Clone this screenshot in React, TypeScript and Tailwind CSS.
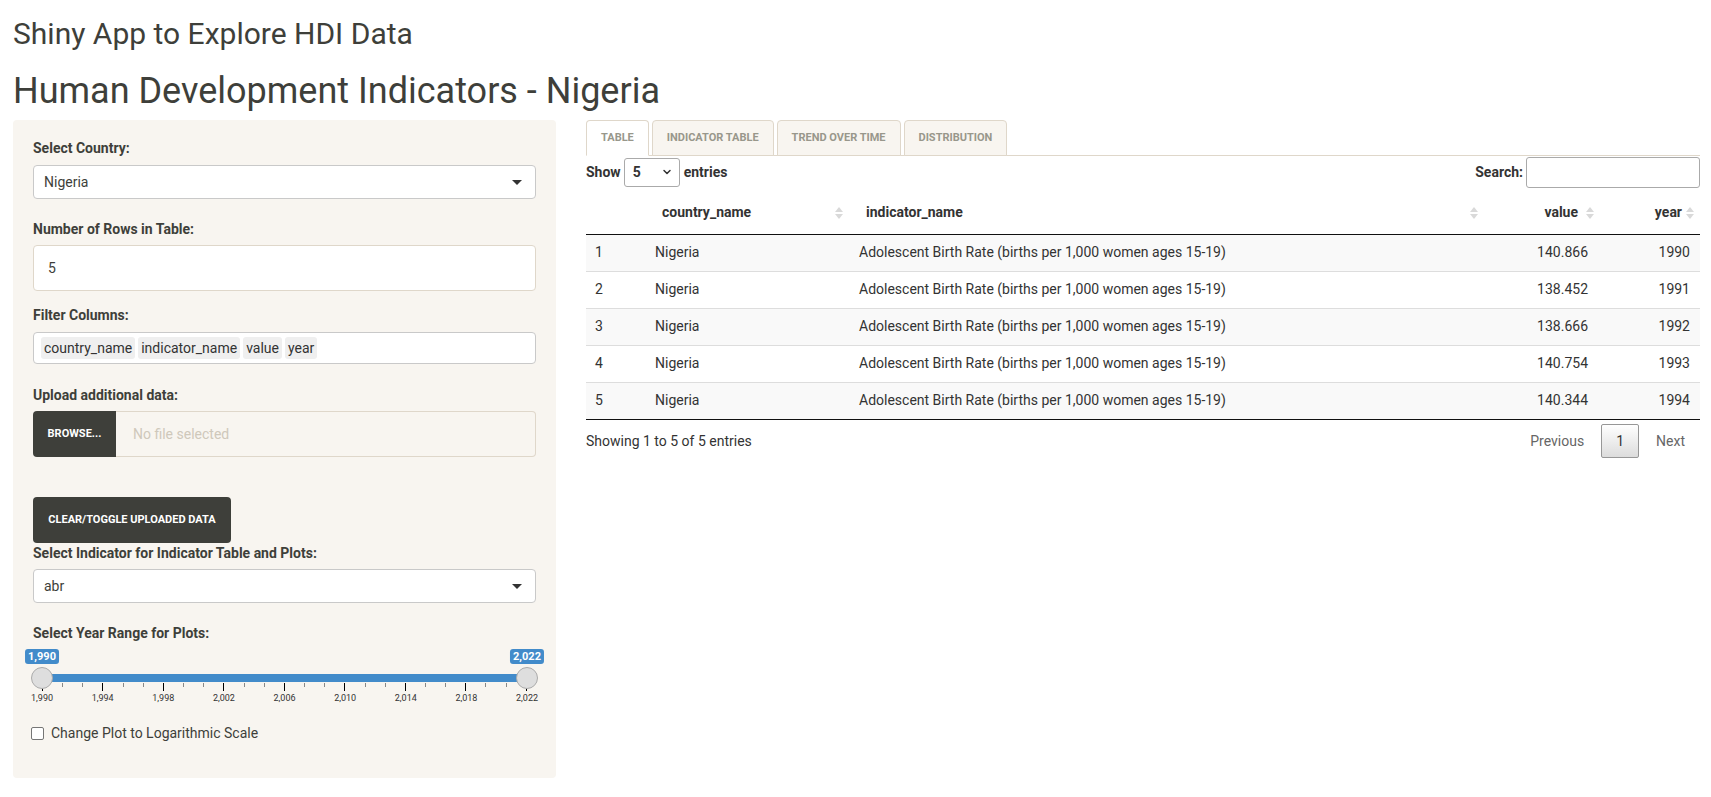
import { ChevronDown } from "lucide-react";

const rows = [
  { id: 1, value: "140.866", year: "1990" },
  { id: 2, value: "138.452", year: "1991" },
  { id: 3, value: "138.666", year: "1992" },
  { id: 4, value: "140.754", year: "1993" },
  { id: 5, value: "140.344", year: "1994" },
];

const tickLabels = ["1,990", "1,994", "1,998", "2,002", "2,006", "2,010", "2,014", "2,018", "2,022"];

const Caret = () => (
  <span className="h-0 w-0 border-x-[5px] border-t-[5px] border-x-transparent border-t-[#333]" />
);

const SortIcon = () => (
  <svg
    width="8"
    height="14"
    viewBox="0 0 8 14"
    className="absolute right-[6px] top-1/2 -translate-y-1/2"
  >
    <path d="M0 6 L4 1 L8 6 Z" fill="#d9d9d9" />
    <path d="M0 8 L8 8 L4 13 Z" fill="#d9d9d9" />
  </svg>
);

const Label = ({ children }: { children: React.ReactNode }) => (
  <div className="text-[14px] font-bold leading-5 text-[#3e3f3a]">{children}</div>
);

const Sidebar = () => {
  return (
    <aside className="w-[543px] shrink-0 rounded bg-[#f8f5f0] px-5 pt-[18px] pb-[35px]">
      {/* Select Country */}
      <Label>Select Country:</Label>
      <div className="mt-[7px] flex h-[34px] items-center justify-between rounded border border-[#c9c9c9] bg-white pl-[10px] pr-[13px] text-[14px]">
        <span>Nigeria</span>
        <Caret />
      </div>

      {/* Number of rows */}
      <div className="mt-[20px]">
        <Label>Number of Rows in Table:</Label>
      </div>
      <div className="mt-[6px] flex h-[46px] items-center rounded border border-[#dfd7ca] bg-white pl-[14px] text-[14px]">
        5
      </div>

      {/* Filter columns */}
      <div className="mt-[14px]">
        <Label>Filter Columns:</Label>
      </div>
      <div className="mt-[7px] flex h-[32px] items-center gap-[3px] rounded border border-[#c9c9c9] bg-white pl-[7px] text-[14px] text-[#333]">
        {["country_name", "indicator_name", "value", "year"].map((t) => (
          <span key={t} className="rounded-[3px] bg-[#efefef] px-[3px] leading-[22px]">
            {t}
          </span>
        ))}
      </div>

      {/* Upload */}
      <div className="mt-[21px]">
        <Label>Upload additional data:</Label>
      </div>
      <div className="mt-[6px] flex h-[46px]">
        <div className="flex w-[83px] items-center justify-center rounded-l bg-[#3e3f3a] text-[11px] font-bold text-white">
          BROWSE...
        </div>
        <div className="flex flex-1 items-center rounded-r border border-l-0 border-[#dfd7ca] bg-[#f8f5f0] pl-[17px] text-[14px] text-[#cfc8bb]">
          No file selected
        </div>
      </div>

      <button className="mt-[40px] flex h-[46px] w-[198px] items-center justify-center rounded bg-[#3e3f3a] text-[11px] font-bold text-white">
        CLEAR/TOGGLE UPLOADED DATA
      </button>

      {/* Indicator */}
      <Label>Select Indicator for Indicator Table and Plots:</Label>
      <div className="mt-[6px] flex h-[34px] items-center justify-between rounded border border-[#c9c9c9] bg-white pl-[10px] pr-[13px] text-[14px]">
        <span>abr</span>
        <Caret />
      </div>

      {/* Year range */}
      <div className="mt-[20px]">
        <Label>Select Year Range for Plots:</Label>
      </div>
      <div className="mx-[9px] mt-[3px]">
        <div className="relative h-[37px]">
          <div className="absolute inset-x-0 top-[28px] h-[8px] bg-[#428bca]" />
          <span className="absolute left-0 top-[3px] -translate-x-1/2 rounded-[3px] bg-[#428bca] px-[3px] text-[11px] font-bold leading-[15px] text-white">
            1,990
          </span>
          <span className="absolute right-0 top-[3px] translate-x-1/2 rounded-[3px] bg-[#428bca] px-[3px] text-[11px] font-bold leading-[15px] text-white">
            2,022
          </span>
          <span className="absolute left-0 top-[21px] z-10 h-[22px] w-[22px] -translate-x-1/2 rounded-full border border-[#ababab] bg-[#dedede]" />
          <span className="absolute right-0 top-[21px] z-10 h-[22px] w-[22px] translate-x-1/2 rounded-full border border-[#ababab] bg-[#dedede]" />
        </div>
        <div className="flex h-[8px] justify-between">
          {Array.from({ length: 25 }).map((_, i) => (
            <span
              key={i}
              className={i % 3 === 0 ? "h-[8px] w-px bg-[#000]" : "h-[4px] w-px bg-[#888]"}
            />
          ))}
        </div>
        <div className="mt-px flex justify-between">
          {tickLabels.map((l) => (
            <span key={l} className="flex w-0 justify-center whitespace-nowrap text-[9px] leading-[12px] text-[#333]">
              {l}
            </span>
          ))}
        </div>
      </div>

      {/* Checkbox */}
      <label className="mt-[19px] -ml-[2px] flex h-5 items-center gap-[7px] text-[14px] text-[#3e3f3a]">
        <span className="h-[13px] w-[13px] rounded-[2px] border border-[#767676] bg-white" />
        Change Plot to Logarithmic Scale
      </label>
    </aside>
  );
};

const Tabs = () => {
  const tabs = ["TABLE", "INDICATOR TABLE", "TREND OVER TIME", "DISTRIBUTION"];
  return (
    <div className="flex h-[36px] gap-[3px] border-b border-[#dfd7ca]">
      {tabs.map((t, i) => (
        <div
          key={t}
          className={
            i === 0
              ? "-mb-px flex items-center rounded-t border border-b-white border-[#dfd7ca] bg-white px-[14px] pt-px text-[11px] font-bold text-[#98978b]"
              : "-mb-px flex items-center rounded-t border border-[#dfd7ca] bg-[#f8f5f0] px-[14px] pt-px text-[11px] font-bold text-[#98978b]"
          }
        >
          {t}
        </div>
      ))}
    </div>
  );
};

const DataTable = () => {
  return (
    <div className="text-[14px] text-[#333]">
      {/* Controls */}
      <div className="flex h-[32px] items-center justify-between">
        <div className="flex items-center gap-[3px] font-bold">
          <span>Show</span>
          <div className="flex h-[29px] w-[56px] items-center justify-between rounded-[3px] border border-[#aaa] bg-white pl-[8px] pr-[6px] font-bold">
            <span>5</span>
            <ChevronDown size={12} strokeWidth={3} />
          </div>
          <span className="ml-[1px]">entries</span>
        </div>
        <div className="flex items-center gap-[3px] font-bold">
          <span>Search:</span>
          <div className="h-[31px] w-[174px] rounded-[3px] border border-[#aaa] bg-white" />
        </div>
      </div>

      {/* Table */}
      <table className="mt-[4px] w-full table-fixed border-collapse">
        <colgroup>
          <col className="w-[59px]" />
          <col className="w-[204px]" />
          <col className="w-[635px]" />
          <col className="w-[116px]" />
          <col className="w-[100px]" />
        </colgroup>
        <thead>
          <tr className="h-[42px] border-b border-[#111]">
            <th />
            <th className="relative pl-[17px] text-left font-bold">
              country_name
              <SortIcon />
            </th>
            <th className="relative pl-[17px] text-left font-bold">
              indicator_name
              <SortIcon />
            </th>
            <th className="relative pr-[22px] text-right font-bold">
              value
              <SortIcon />
            </th>
            <th className="relative pr-[18px] text-right font-bold">
              year
              <SortIcon />
            </th>
          </tr>
        </thead>
        <tbody>
          {rows.map((r, i) => (
            <tr
              key={r.id}
              className={
                i % 2 === 0
                  ? "h-[37px] border-t border-[#ddd] bg-[#f9f9f9]"
                  : "h-[37px] border-t border-[#ddd] bg-white"
              }
            >
              <td className="px-[9px]">{r.id}</td>
              <td className="px-[10px]">Nigeria</td>
              <td className="px-[10px]">Adolescent Birth Rate (births per 1,000 women ages 15-19)</td>
              <td className="px-[12px] text-right">{r.value}</td>
              <td className="px-[10px] text-right">{r.year}</td>
            </tr>
          ))}
        </tbody>
      </table>
      <div className="border-t border-[#111]" />

      {/* Footer */}
      <div className="mt-[4px] flex items-center justify-between">
        <span>Showing 1 to 5 of 5 entries</span>
        <div className="flex items-center">
          <span className="border border-transparent px-[14px] py-[7px] leading-[18px] text-[#666]">Previous</span>
          <span className="ml-[2px] rounded-[2px] border border-[#979797] bg-gradient-to-b from-white to-[#dcdcdc] px-[14px] py-[7px] leading-[18px] text-[#333]">
            1
          </span>
          <span className="ml-[2px] border border-transparent px-[14px] py-[7px] leading-[18px] text-[#666]">Next</span>
        </div>
      </div>
    </div>
  );
};

export default function App() {
  return (
    <div className="min-h-screen bg-white pl-[13px] pr-[11px] font-['Roboto',sans-serif] text-[#3e3f3a]">
      <h1 className="pt-5 text-[30px] leading-[28px]">Shiny App to Explore HDI Data</h1>
      <h2 className="mt-[24px] text-[36px] leading-[38px]">Human Development Indicators - Nigeria</h2>
      <div className="mt-[10px] flex gap-[30px]">
        <Sidebar />
        <main className="min-w-0 flex-1">
          <Tabs />
          <DataTable />
        </main>
      </div>
    </div>
  );
}
